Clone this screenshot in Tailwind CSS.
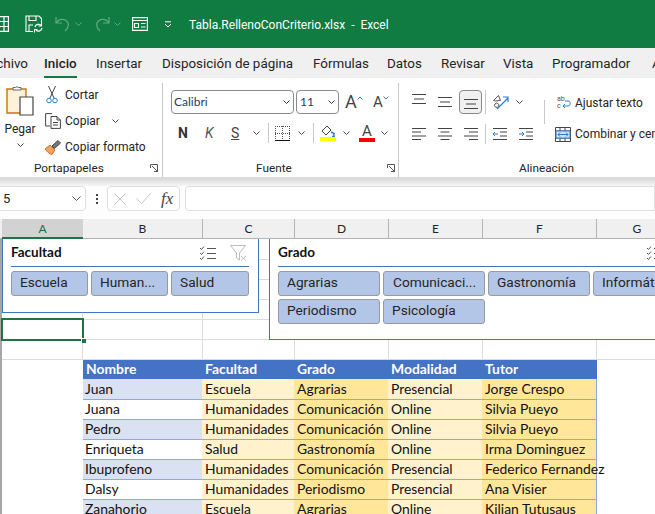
<!DOCTYPE html>
<html lang="es">
<head>
<meta charset="UTF-8">
<meta name="viewport" content="width=device-width, initial-scale=1.0">
<script src="https://cdn.jsdelivr.net/npm/@tailwindcss/browser@4"></script>
<title>Tabla.RellenoConCriterio.xlsx - Excel</title>
</head>
<body class="bg-white">
<div class="w-[655px] h-[514px] overflow-hidden font-['Roboto',sans-serif] text-[#242424]">

  <!-- Title bar -->
  <header class="h-[48px] bg-[#107c41] flex items-center text-white relative">
    <svg class="w-[9px] h-[16px] shrink-0" viewBox="0 0 9 16" fill="none" stroke="white" stroke-width="1.2"><path d="M0 .6h8.400v14.800H0M0 5.500h8.400M0 10.500h8.400M4 .6v14.800"/></svg>
    <svg class="w-[18px] h-[18px] ml-[16px] shrink-0" viewBox="0 0 18 18" fill="none" stroke="white" stroke-width="1.1"><path d="M8 16.500H1V1h13l2.500 2.500V8M4 1v4.500h7V1M4 16V10h4"/><path d="M10 12a3.500 3.500 0 0 1 6-1.500M17 13a3.500 3.500 0 0 1-6 2" stroke-width="1.200"/><path d="M16.500 8v3h-3M9.500 17.500v-3h3"/></svg>
    <svg class="w-[16px] h-[16px] ml-[12px] shrink-0" viewBox="0 0 16 16" fill="none" stroke="#5fa883" stroke-width="1.200"><path d="M1 1v6h6M1.500 6.500C4 3 8 2.500 11 4.500c3.500 2.500 3 7-1 10.500"/></svg>
    <svg class="w-[7px] h-[4px] ml-[4px] shrink-0" viewBox="0 0 7 4" fill="none" stroke="#5fa883"><path d="M.5.500l3 3 3-3"/></svg>
    <svg class="w-[16px] h-[16px] ml-[12px] shrink-0" viewBox="0 0 16 16" fill="none" stroke="#5fa883" stroke-width="1.200"><path d="M15 1v6H9M14.500 6.500C12 3 8 2.500 5 4.500 1.500 7 2 11.500 6 15"/></svg>
    <svg class="w-[7px] h-[4px] ml-[4px] shrink-0" viewBox="0 0 7 4" fill="none" stroke="#5fa883"><path d="M.5.500l3 3 3-3"/></svg>
    <svg class="w-[16px] h-[14px] ml-[11px] shrink-0" viewBox="0 0 16 14" fill="none" stroke="white" stroke-width="1.100"><path d="M.6.600h14.800v12.800H.6zM.6 3.500h14.800M2.500 6.500h4v4h-4zM9 6.500h4.500M9 10h4.500"/></svg>
    <svg class="w-[8px] h-[7px] ml-[16px] shrink-0" viewBox="0 0 8 7" fill="none" stroke="white"><path d="M1 .800h6M1 3l3 3 3-3"/></svg>
    <span class="ml-[17px] mt-[2px] text-[12px] whitespace-pre">Tabla.RellenoConCriterio.xlsx  -  Excel</span>
  </header>

  <!-- Tabs -->
  <nav class="h-[30px] bg-[#f0f0f0] flex items-center text-[13.400px] whitespace-nowrap pt-[2px]">
    <span class="w-[44px] shrink-0 flex justify-end pr-[16px]">Archivo</span>
    <span class="w-[52px] shrink-0 font-medium relative">Inicio<span class="absolute left-0 top-[22px] w-[33px] h-[2px] bg-[#107c41]"></span></span>
    <span class="w-[66px] shrink-0">Insertar</span>
    <span class="w-[151px] shrink-0">Disposición de página</span>
    <span class="w-[74px] shrink-0">Fórmulas</span>
    <span class="w-[54px] shrink-0">Datos</span>
    <span class="w-[62px] shrink-0">Revisar</span>
    <span class="w-[49px] shrink-0">Vista</span>
    <span class="w-[100px] shrink-0">Programador</span>
    <span class="shrink-0">Ayuda</span>
  </nav>

  <!-- Ribbon -->
  <section class="h-[100px] bg-white flex text-[12px] whitespace-nowrap border-b border-[#dcdcdc]">
    <!-- Portapapeles -->
    <div class="w-[163px] shrink-0 h-[94px] mt-[5px] border-r border-[#c8c8c8] relative">
      <div class="flex h-[78px]">
        <div class="w-[46px] flex flex-col items-center">
          <svg class="w-[28px] h-[31px] mt-[2px] mr-[6px]" viewBox="0 0 28 31" fill="none"><path d="M1 4h19v24H1z" fill="#fdf1dc" stroke="#c9730f" stroke-width="1.400"/><path d="M7 5V2.500h2.500a2 2 0 0 1 3 0H15V5z" fill="#fff" stroke="#666"/><path d="M14 12h13v18H14z" fill="#fff" stroke="#444" stroke-width="1.200"/></svg>
          <span class="mr-[6px] mt-[5px] leading-[16px]">Pegar</span>
          <svg class="w-[7px] h-[4px] mt-[6px] mr-[6px]" viewBox="0 0 7 4" fill="none" stroke="#444"><path d="M.5.500l3 3 3-3"/></svg>
        </div>
        <div class="flex flex-col">
          <div class="flex items-center h-[26px] shrink-0 mt-[-1px]">
            <svg class="w-[12px] h-[18px]" viewBox="0 0 12 18" fill="none" stroke="#444"><path d="M2.500 0l5.500 12M9.500 0L4 12"/><circle cx="3" cy="14.500" r="2.300" stroke="#2b7cd3"/><circle cx="9" cy="14.500" r="2.300" stroke="#2b7cd3"/></svg>
            <span class="ml-[7px]">Cortar</span>
          </div>
          <div class="flex items-center h-[26px] shrink-0">
            <svg class="w-[16px] h-[16px] -ml-[1px]" viewBox="0 0 16 16" fill="none" stroke="#444"><path d="M5 13H.6V.6h6.500M6 3.500h6l3.400 3.500v8.400H6zM12 3.500V7h3.400M8 9.500h5M8 12h5"/></svg>
            <span class="ml-[4px]">Copiar</span>
            <svg class="w-[7px] h-[4px] ml-[12px]" viewBox="0 0 7 4" fill="none" stroke="#444"><path d="M.5.500l3 3 3-3"/></svg>
          </div>
          <div class="flex items-center h-[26px] shrink-0">
            <svg class="w-[16px] h-[15px] -ml-[1px]" viewBox="0 0 16 15" fill="none"><path d="M0 9l5-4 5 5-3 4.500C4 14 2 11.500 0 9z" fill="#f3a15c" stroke="#d0701c"/><path d="M7 6l6-5.500 2.500 2.500-6 5.500z" fill="#777" stroke="#444"/></svg>
            <span class="ml-[4px]">Copiar formato</span>
          </div>
        </div>
      </div>
      <div class="absolute left-[34px] top-[77px] text-[11.800px] leading-[16px]">Portapapeles</div>
      <svg class="absolute left-[150px] top-[81px] w-[8px] h-[8px]" viewBox="0 0 8 8" fill="none" stroke="#555"><path d="M.5 4V.5h7v7H4M2 2l5 5M4.500 7.500h3v-3"/></svg>
    </div>

    <!-- Fuente -->
    <div class="w-[236px] shrink-0 h-[94px] mt-[5px] border-r border-[#c8c8c8] relative pl-[8px]">
      <div class="flex items-center h-[24px] mt-[7px]">
        <div class="w-[123px] h-[24px] border border-[#8a8a8a] rounded-[4px] flex items-center justify-between pl-[2px] pr-[3px] font-['Lato'] text-[#1f3a6e]">Calibri
          <svg class="w-[7px] h-[4px]" viewBox="0 0 7 4" fill="none" stroke="#333"><path d="M.5.500l3 3 3-3"/></svg>
        </div>
        <div class="w-[43px] h-[24px] ml-[2px] border border-[#8a8a8a] rounded-[4px] flex items-center justify-between pl-[3px] pr-[3px] font-['Lato'] text-[#1f3a6e]">11
          <svg class="w-[7px] h-[4px]" viewBox="0 0 7 4" fill="none" stroke="#333"><path d="M.5.500l3 3 3-3"/></svg>
        </div>
        <span class="ml-[6px] text-[18px] leading-none text-[#444] w-[12px]">A</span>
        <svg class="w-[6px] h-[4px] mb-[8px]" viewBox="0 0 6 4" fill="none" stroke="#2b7cd3"><path d="M.5 3.500L3 1l2.500 2.500"/></svg>
        <span class="ml-[10px] text-[15px] leading-none text-[#444] w-[10px]">A</span>
        <svg class="w-[6px] h-[4px] mb-[8px]" viewBox="0 0 6 4" fill="none" stroke="#2b7cd3"><path d="M.5.500L3 3l2.500-2.500"/></svg>
      </div>
      <div class="flex items-center h-[22px] mt-[8px]">
        <span class="ml-[7px] w-[27px] font-bold text-[14px] leading-none text-[#333]">N</span>
        <span class="w-[26px] italic text-[14px] leading-none text-[#555]">K</span>
        <span class="w-[22px] underline text-[14px] leading-none text-[#444]">S</span>
        <svg class="w-[7px] h-[4px]" viewBox="0 0 7 4" fill="none" stroke="#444"><path d="M.5.500l3 3 3-3"/></svg>
        <span class="ml-[8px] w-px h-[20px] bg-[#c8c8c8]"></span>
        <svg class="w-[15px] h-[15px] ml-[6px]" viewBox="0 0 15 15" fill="none" stroke="#555"><path d="M0 .5h15M0 7.500h15M7.500 0v14M.5 0v14M14.500 0v14" stroke-dasharray="1 1"/><path d="M0 14.500h15" stroke="#111"/></svg>
        <svg class="w-[7px] h-[4px] ml-[8px]" viewBox="0 0 7 4" fill="none" stroke="#444"><path d="M.5.500l3 3 3-3"/></svg>
        <span class="ml-[8px] w-px h-[20px] bg-[#c8c8c8]"></span>
        <svg class="w-[16px] h-[16px] ml-[6px]" viewBox="0 0 16 16" fill="none"><path d="M2 6l5-5 4 4-5 5z" stroke="#444"/><path d="M11 7l3 1.500v3h-2" stroke="#2b7cd3" stroke-width="1.500"/><rect y="12" width="16" height="4" fill="#ffff00"/></svg>
        <svg class="w-[7px] h-[4px] ml-[7px]" viewBox="0 0 7 4" fill="none" stroke="#444"><path d="M.5.500l3 3 3-3"/></svg>
        <div class="ml-[9px] w-[16px] flex flex-col items-center"><span class="text-[15px] leading-[13px] text-[#444]">A</span><span class="w-[16px] h-[4px] bg-[#ff0000]"></span></div>
        <svg class="w-[7px] h-[4px] ml-[6px]" viewBox="0 0 7 4" fill="none" stroke="#444"><path d="M.5.500l3 3 3-3"/></svg>
      </div>
      <div class="absolute left-[93px] top-[77px] text-[11.800px] leading-[16px]">Fuente</div>
      <svg class="absolute left-[224px] top-[81px] w-[8px] h-[8px]" viewBox="0 0 8 8" fill="none" stroke="#555"><path d="M.5 4V.5h7v7H4M2 2l5 5M4.500 7.500h3v-3"/></svg>
    </div>

    <!-- Alineacion -->
    <div class="flex-1 h-[94px] mt-[5px] relative pl-[13px]">
      <div class="flex items-center h-[24px] mt-[7px]">
        <svg class="w-[14px] h-[11px] mb-[6px]" viewBox="0 0 14 11" stroke="#444"><path d="M0 .5h14M2 5h10M0 9.500h14" fill="none"/></svg>
        <svg class="w-[14px] h-[11px] ml-[12px]" viewBox="0 0 14 11" stroke="#444"><path d="M0 .5h14M2 5h10M0 9.500h14" fill="none"/></svg>
        <div class="ml-[7px] w-[23px] h-[24px] bg-[#f0f0f0] border border-[#8a8a8a] rounded-[4px] flex items-end justify-center pb-[3px]">
          <svg class="w-[14px] h-[11px]" viewBox="0 0 14 11" stroke="#444"><path d="M0 .5h14M2 5h10M0 9.500h14" fill="none"/></svg>
        </div>
        <span class="ml-[3px] w-px h-[24px] bg-[#c8c8c8]"></span>
        <svg class="w-[17px] h-[16px] ml-[6px]" viewBox="0 0 17 16" fill="none"><path d="M1.500 6.500l5-5 2 5-5 .5zM3 10a2 2 0 1 0 3.500 2.500A2 2 0 0 0 3 10z" stroke="#555"/><path d="M5 15L16 4M11 3h5v5" stroke="#2b7cd3" stroke-width="1.200"/></svg>
        <svg class="w-[7px] h-[4px] ml-[7px]" viewBox="0 0 7 4" fill="none" stroke="#444"><path d="M.5.500l3 3 3-3"/></svg>
        <span class="ml-[21px] w-px h-[24px] bg-[#c8c8c8] relative top-[10px]"></span>
        <svg class="w-[14px] h-[14px] ml-[12px]" viewBox="0 0 14 14"><text x="0" y="6" font-size="7" fill="#555">ab</text><text x="0" y="13" font-size="7" fill="#555">c</text><path d="M6 11h5c3 0 3-5 0-5H8M8 9l-2 2 2 2" fill="none" stroke="#2b7cd3"/></svg>
        <span class="ml-[4px] mt-[2px]">Ajustar texto</span>
      </div>
      <div class="flex items-center h-[22px] mt-[9px]">
        <svg class="w-[14px] h-[12px]" viewBox="0 0 14 12" stroke="#444"><path d="M0 .5h14M0 4h9M0 8h14M0 11.500h9" fill="none"/></svg>
        <svg class="w-[14px] h-[12px] ml-[12px]" viewBox="0 0 14 12" stroke="#444"><path d="M0 .5h14M2.500 4h9M0 8h14M2.500 11.500h9" fill="none"/></svg>
        <svg class="w-[14px] h-[12px] ml-[12px]" viewBox="0 0 14 12" stroke="#444"><path d="M0 .5h14M5 4h9M0 8h14M5 11.500h9" fill="none"/></svg>
        <span class="ml-[7px] w-px h-[20px] bg-[#c8c8c8]"></span>
        <svg class="w-[14px] h-[12px] ml-[7px]" viewBox="0 0 14 12" fill="none"><path d="M0 .5h14M7 4h7M7 8h7M0 11.500h14" stroke="#444"/><path d="M5 6H0M2 4L0 6l2 2" stroke="#2b7cd3"/></svg>
        <svg class="w-[14px] h-[12px] ml-[12px]" viewBox="0 0 14 12" fill="none"><path d="M0 .5h14M7 4h7M7 8h7M0 11.500h14" stroke="#444"/><path d="M0 6h5M3 4l2 2-2 2" stroke="#2b7cd3"/></svg>
        <svg class="w-[16px] h-[15px] ml-[22px]" viewBox="0 0 16 15" fill="none"><path d="M.5.500h15v14H.5zM.5 4h15M.5 11h15M5 .5V4M10 .5V4M5 11v3.500M10 11v3.500" stroke="#444"/><path d="M1 4h14v7H1z" fill="#cfe4f7" stroke="#2b7cd3"/><path d="M3 7.500h10M5 5.500l-2 2 2 2M11 5.500l2 2-2 2" stroke="#2b7cd3"/></svg>
        <span class="ml-[4px]">Combinar y centrar</span>
      </div>
      <div class="absolute left-[120px] top-[77px] text-[11.800px] leading-[16px]">Alineación</div>
    </div>
  </section>

  <!-- Gap under ribbon -->
  <div class="h-[8px] bg-gradient-to-b from-[#d8d8d8] to-[#f6f6f6]"></div>

  <!-- Formula bar -->
  <div class="h-[33px] bg-[#fdfdfd] flex items-start text-[14px]">
    <div class="w-[87px] h-[25px] bg-white border border-[#dedede] rounded-r-[4px] flex items-center justify-between pl-[1px] pr-[4px] ml-[-1px]">
      <span class="ml-[2px] text-[13px]">5</span>
      <svg class="w-[9px] h-[5px]" viewBox="0 0 9 5" fill="none" stroke="#555"><path d="M.5.500l4 4 4-4"/></svg>
    </div>
    <div class="w-[21px] h-[25px] flex flex-col items-center justify-center gap-[2px]">
      <span class="w-[2px] h-[2px] bg-[#444]"></span><span class="w-[2px] h-[2px] bg-[#444]"></span><span class="w-[2px] h-[2px] bg-[#444]"></span>
    </div>
    <div class="w-[73px] h-[25px] bg-white border border-[#dedede] rounded-[4px] flex items-center">
      <svg class="w-[12px] h-[12px] ml-[6px]" viewBox="0 0 12 12" fill="none" stroke="#c4c4c4"><path d="M.5.500l11 11M11.500.5l-11 11"/></svg>
      <svg class="w-[15px] h-[11px] ml-[10px]" viewBox="0 0 15 11" fill="none" stroke="#c4c4c4"><path d="M.5 5.500l5 5 9-10"/></svg>
      <span class="ml-[10px] italic font-['Liberation_Serif'] text-[17px] text-[#444] leading-none">fx</span>
    </div>
    <div class="flex-1 h-[25px] ml-[5px] bg-white border border-[#dedede] rounded-l-[4px]"></div>
  </div>

  <!-- Column headers -->
  <div class="h-[20px] flex bg-[#f0f0f0] border-b border-[#b4b4b4] text-[12px] leading-[19px] text-center font-['Lato']">
    <div class="w-[2px] shrink-0"></div>
    <div class="w-[81px] shrink-0 bg-[#d2d2d2] border-b-2 border-[#217346] text-[#1d6f42] h-[20px]">A</div>
    <div class="w-[120px] shrink-0 border-r border-[#b4b4b4]">B</div>
    <div class="w-[92px] shrink-0 border-r border-[#b4b4b4]">C</div>
    <div class="w-[94px] shrink-0 border-r border-[#b4b4b4]">D</div>
    <div class="w-[94px] shrink-0 border-r border-[#b4b4b4]">E</div>
    <div class="w-[114px] shrink-0 border-r border-[#b4b4b4]">F</div>
    <div class="w-[80px] shrink-0">G</div>
  </div>

  <!-- Sheet -->
  <div class="relative font-['Lato'] text-[13.900px] text-[#111]">
    <!-- Empty grid rows -->
    <div class="border-l-2 border-[#a6a6a6]">
      <div class="h-[21px] border-b border-[#dcdcdc] flex"><span class="w-[81px] border-r border-[#dcdcdc]"></span><span class="w-[120px] border-r border-[#dcdcdc]"></span><span class="w-[92px] border-r border-[#dcdcdc]"></span><span class="w-[94px] border-r border-[#dcdcdc]"></span><span class="w-[94px] border-r border-[#dcdcdc]"></span><span class="w-[114px] border-r border-[#dcdcdc]"></span></div>
      <div class="h-[20px] border-b border-[#dcdcdc] flex"><span class="w-[81px] border-r border-[#dcdcdc]"></span><span class="w-[120px] border-r border-[#dcdcdc]"></span><span class="w-[92px] border-r border-[#dcdcdc]"></span><span class="w-[94px] border-r border-[#dcdcdc]"></span><span class="w-[94px] border-r border-[#dcdcdc]"></span><span class="w-[114px] border-r border-[#dcdcdc]"></span></div>
      <div class="h-[20px] border-b border-[#dcdcdc] flex"><span class="w-[81px] border-r border-[#dcdcdc]"></span><span class="w-[120px] border-r border-[#dcdcdc]"></span><span class="w-[92px] border-r border-[#dcdcdc]"></span><span class="w-[94px] border-r border-[#dcdcdc]"></span><span class="w-[94px] border-r border-[#dcdcdc]"></span><span class="w-[114px] border-r border-[#dcdcdc]"></span></div>
      <div class="h-[20px] border-b border-[#dcdcdc] flex"><span class="w-[81px] border-r border-[#dcdcdc]"></span><span class="w-[120px] border-r border-[#dcdcdc]"></span><span class="w-[92px] border-r border-[#dcdcdc]"></span><span class="w-[94px] border-r border-[#dcdcdc]"></span><span class="w-[94px] border-r border-[#dcdcdc]"></span><span class="w-[114px] border-r border-[#dcdcdc]"></span></div>
      <div class="h-[20px] border-b border-[#dcdcdc] flex"><span class="w-[81px] border-r border-[#dcdcdc]"></span><span class="w-[120px] border-r border-[#dcdcdc]"></span><span class="w-[92px] border-r border-[#dcdcdc]"></span><span class="w-[94px] border-r border-[#dcdcdc]"></span><span class="w-[94px] border-r border-[#dcdcdc]"></span><span class="w-[114px] border-r border-[#dcdcdc]"></span></div>
      <div class="h-[20px] border-b border-[#dcdcdc] flex"><span class="w-[81px] border-r border-[#dcdcdc]"></span><span class="w-[120px] border-r border-[#dcdcdc]"></span><span class="w-[92px] border-r border-[#dcdcdc]"></span><span class="w-[94px] border-r border-[#dcdcdc]"></span><span class="w-[94px] border-r border-[#dcdcdc]"></span><span class="w-[114px] border-r border-[#dcdcdc]"></span></div>
    </div>

    <!-- Table -->
    <div class="border-l-2 border-[#a6a6a6] pl-[81px] relative">
      <div class="flex h-[19px] w-[514px] bg-[#4472c4] text-white font-bold leading-[18px]">
        <div class="w-[119px] pl-[3px]">Nombre</div><div class="w-[92px] pl-[3px]">Facultad</div><div class="w-[94px] pl-[3px]">Grado</div><div class="w-[94px] pl-[3px]">Modalidad</div><div class="w-[115px] pl-[3px]">Tutor</div>
      </div>
      <div class="flex h-[21px] w-[514px] leading-[20px] border-b border-r border-[#8ea9db]">
        <div class="w-[119px] pl-[2px] bg-[#d9e1f2]">Juan</div><div class="w-[92px] pl-[3px] bg-[#fff2cc]">Escuela</div><div class="w-[94px] pl-[3px] bg-[#ffe699]">Agrarias</div><div class="w-[94px] pl-[3px] bg-[#fff2cc]">Presencial</div><div class="w-[114px] pl-[3px] bg-[#ffe699]">Jorge Crespo</div>
      </div>
      <div class="flex h-[20px] w-[514px] leading-[18px] border-b border-r border-[#8ea9db]">
        <div class="w-[119px] pl-[2px] bg-white">Juana</div><div class="w-[92px] pl-[3px] bg-[#fff2cc]">Humanidades</div><div class="w-[94px] pl-[3px] bg-[#ffe699]">Comunicación</div><div class="w-[94px] pl-[3px] bg-[#fff2cc]">Online</div><div class="w-[114px] pl-[3px] bg-[#ffe699]">Silvia Pueyo</div>
      </div>
      <div class="flex h-[20px] w-[514px] leading-[18px] border-b border-r border-[#8ea9db]">
        <div class="w-[119px] pl-[2px] bg-[#d9e1f2]">Pedro</div><div class="w-[92px] pl-[3px] bg-[#fff2cc]">Humanidades</div><div class="w-[94px] pl-[3px] bg-[#ffe699]">Comunicación</div><div class="w-[94px] pl-[3px] bg-[#fff2cc]">Online</div><div class="w-[114px] pl-[3px] bg-[#ffe699]">Silvia Pueyo</div>
      </div>
      <div class="flex h-[20px] w-[514px] leading-[18px] border-b border-r border-[#8ea9db]">
        <div class="w-[119px] pl-[2px] bg-white">Enriqueta</div><div class="w-[92px] pl-[3px] bg-[#fff2cc]">Salud</div><div class="w-[94px] pl-[3px] bg-[#ffe699]">Gastronomía</div><div class="w-[94px] pl-[3px] bg-[#fff2cc]">Online</div><div class="w-[114px] pl-[3px] bg-[#ffe699]">Irma Dominguez</div>
      </div>
      <div class="flex h-[20px] w-[514px] leading-[18px] border-b border-r border-[#8ea9db]">
        <div class="w-[119px] pl-[2px] bg-[#d9e1f2]">Ibuprofeno</div><div class="w-[92px] pl-[3px] bg-[#fff2cc]">Humanidades</div><div class="w-[94px] pl-[3px] bg-[#ffe699]">Comunicación</div><div class="w-[94px] pl-[3px] bg-[#fff2cc]">Presencial</div><div class="w-[114px] pl-[3px] bg-[#ffe699] whitespace-nowrap">Federico Fernandez</div>
      </div>
      <div class="flex h-[20px] w-[514px] leading-[18px] border-b border-r border-[#8ea9db]">
        <div class="w-[119px] pl-[2px] bg-white">Dalsy</div><div class="w-[92px] pl-[3px] bg-[#fff2cc]">Humanidades</div><div class="w-[94px] pl-[3px] bg-[#ffe699]">Periodismo</div><div class="w-[94px] pl-[3px] bg-[#fff2cc]">Presencial</div><div class="w-[114px] pl-[3px] bg-[#ffe699]">Ana Visier</div>
      </div>
      <div class="flex h-[20px] w-[514px] leading-[18px] border-b border-r border-[#8ea9db]">
        <div class="w-[119px] pl-[2px] bg-[#d9e1f2]">Zanahorio</div><div class="w-[92px] pl-[3px] bg-[#fff2cc]">Escuela</div><div class="w-[94px] pl-[3px] bg-[#ffe699]">Agrarias</div><div class="w-[94px] pl-[3px] bg-[#fff2cc]">Online</div><div class="w-[114px] pl-[3px] bg-[#ffe699]">Kilian Tutusaus</div>
      </div>
    </div>

    <!-- Active cell -->
    <div class="absolute left-[1px] top-[79px] w-[83px] h-[23px] border-2 border-[#217346]">
      <span class="absolute right-[-4px] bottom-[-4px] w-[5px] h-[5px] bg-[#217346] border-l border-t border-white"></span>
    </div>

    <!-- Slicer Facultad -->
    <div class="absolute left-[2px] top-0 w-[257px] h-[74px] bg-white border-r border-b border-l border-[#4472c4] pl-[8px] pr-[9px] text-[13.700px]">
      <div class="h-[28px] border-b border-[#4472c4] flex items-center justify-between pr-[2px]">
        <span class="font-['Lato'] font-bold text-[13.500px] text-[#111]">Facultad</span>
        <div class="flex items-center gap-[14px]">
          <svg class="w-[17px] h-[14px]" viewBox="0 0 17 14" fill="none" stroke="#555"><path d="M1 2l1.500 1.500L5 .5M1 7l1.500 1.500L5 5.500M1 12l1.500 1.500L5 10.500M8 2.500h9M8 7.500h9M8 12.500h9"/></svg>
          <svg class="w-[17px] h-[16px]" viewBox="0 0 17 16" fill="none" stroke="#bdbdbd"><path d="M.5.500h15L9.500 8v7L6.500 13V8z"/><path d="M11 11l5 4.500M16 11l-5 4.500"/></svg>
        </div>
      </div>
      <div class="flex gap-[3px] mt-[4px] font-['Roboto'] text-[#242424]">
        <div class="w-[77px] h-[25px] bg-[#b4c6e7] border border-[#9a9a9a] rounded-[3px] pl-[8px] leading-[21px]">Escuela</div>
        <div class="w-[77px] h-[25px] bg-[#b4c6e7] border border-[#9a9a9a] rounded-[3px] pl-[8px] leading-[21px]">Human...</div>
        <div class="w-[78px] h-[25px] bg-[#b4c6e7] border border-[#9a9a9a] rounded-[3px] pl-[8px] leading-[21px]">Salud</div>
      </div>
    </div>

    <!-- Slicer Grado -->
    <div class="absolute left-[269px] top-0 w-[450px] h-[101px] bg-white border-l border-b border-[#4472c4] pl-[8px] text-[13.700px]">
      <div class="h-[28px] w-[430px] border-b border-[#4472c4] flex items-center">
        <span class="font-['Lato'] font-bold text-[13.500px] text-[#111]">Grado</span>
        <svg class="w-[17px] h-[14px] ml-[331px]" viewBox="0 0 17 14" fill="none" stroke="#555"><path d="M1 2l1.500 1.500L5 .5M1 7l1.500 1.500L5 5.500M1 12l1.500 1.500L5 10.500M8 2.500h9M8 7.500h9M8 12.500h9"/></svg>
      </div>
      <div class="grid grid-cols-[102px_102px_102px_102px] gap-[3px] mt-[4px] font-['Roboto'] text-[#242424]">
        <div class="h-[25px] bg-[#b4c6e7] border border-[#9a9a9a] rounded-[3px] pl-[8px] leading-[21px]">Agrarias</div>
        <div class="h-[25px] bg-[#b4c6e7] border border-[#9a9a9a] rounded-[3px] pl-[9px] leading-[21px]">Comunicaci...</div>
        <div class="h-[25px] bg-[#b4c6e7] border border-[#9a9a9a] rounded-[3px] pl-[8px] leading-[21px]">Gastronomía</div>
        <div class="h-[25px] bg-[#b4c6e7] border border-[#9a9a9a] rounded-[3px] pl-[8px] leading-[21px]">Informática</div>
        <div class="h-[25px] bg-[#b4c6e7] border border-[#9a9a9a] rounded-[3px] pl-[8px] leading-[21px]">Periodismo</div>
        <div class="h-[25px] bg-[#b4c6e7] border border-[#9a9a9a] rounded-[3px] pl-[8px] leading-[21px]">Psicología</div>
      </div>
    </div>
  </div>
</div>
</body>
</html>
